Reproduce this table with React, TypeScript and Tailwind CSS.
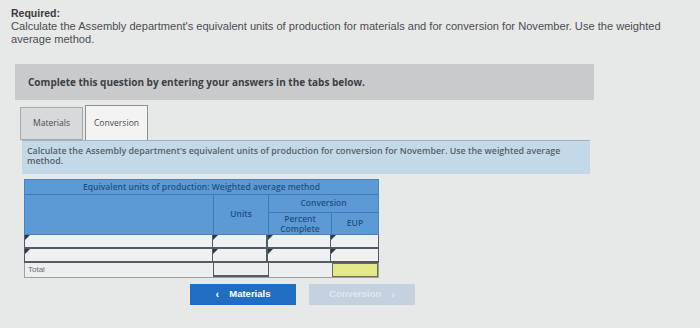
import React from "react";

const Marker = () => (
  <svg className="absolute left-0 top-0" width="5" height="5" viewBox="0 0 5 5">
    <polygon points="0,0 5,0 0,5" fill="#2b3a4a" />
  </svg>
);

function InputCell({ w, marker = true, className = "" }: { w: string; marker?: boolean; className?: string }) {
  return (
    <div className={`relative h-full ${w} ${className}`}>
      {marker && <Marker />}
    </div>
  );
}

export default function App() {
  return (
    <div className="w-[700px] h-[328px] bg-[#e7e8e8] overflow-hidden pt-[7px] pl-[11px] text-[#4a4d50]" style={{ fontFamily: "'Liberation Sans', Arial, sans-serif" }}>
      <div className="text-[10.5px] font-bold leading-[13px] text-[#3a3c3e]">Required:</div>
      <div className="text-[11.1px] leading-[13px] w-[660px]">
        Calculate the Assembly department's equivalent units of production for materials and for conversion for November. Use the weighted average method.
      </div>

      <div className="mt-[18px] ml-[4px] w-[579px] h-[36px] bg-[#c8cacb] flex items-center pl-[13px]">
        <span className="text-[10px] font-bold text-[#3d4044]" style={{ fontFamily: "'Open Sans', 'DejaVu Sans', sans-serif" }}>
          Complete this question by entering your answers in the tabs below.
        </span>
      </div>

      <div className="ml-[9px] mt-[5px] flex items-end gap-[2px]" style={{ fontFamily: "'Open Sans', 'DejaVu Sans', sans-serif" }}>
        <div className="w-[63px] h-[33px] bg-[#d8d9da] border border-[#a7a9ab] flex items-center justify-center text-[8.6px] text-[#4a4d50]">
          Materials
        </div>
        <div className="w-[63px] h-[35px] bg-[#f3f3f3] border border-[#8d9094] border-b-0 flex items-center justify-center text-[8.6px] text-[#4a4d50]">
          Conversion
        </div>
      </div>

      <div className="ml-[11px] w-[568px] h-[34px] bg-[#c4d9e7] border-t border-[#9fb4c4] pl-[5px] pt-[5px] pr-[10px] text-[8.9px] leading-[10px] font-semibold text-[#55606a]" style={{ fontFamily: "'Open Sans', 'DejaVu Sans', sans-serif" }}>
        Calculate the Assembly department's equivalent units of production for conversion for November. Use the weighted average method.
      </div>

      <div className="ml-[13px] mt-[5px] w-[355px] text-[8.5px] text-[#24507f]" style={{ fontFamily: "'Open Sans', 'DejaVu Sans', sans-serif" }}>
        <div className="bg-[#5c9ad6] border border-[#4a82c0]">
          <div className="h-[15px] flex items-center justify-center border-b border-[#4379b8] font-semibold">
            Equivalent units of production: Weighted average method
          </div>
          <div className="flex h-[39px]">
            <div className="w-[189px] border-r border-[#4379b8]" />
            <div className="w-[55px] border-r border-[#4379b8] flex items-center justify-center font-semibold">Units</div>
            <div className="flex-1 flex flex-col">
              <div className="h-[18px] border-b border-[#4379b8] flex items-center justify-center font-semibold">Conversion</div>
              <div className="flex flex-1">
                <div className="w-[63px] border-r border-[#4379b8] flex flex-col items-center justify-center text-center leading-[9.5px] font-semibold">
                  <span>Percent</span>
                  <span>Complete</span>
                </div>
                <div className="flex-1 flex items-center justify-center font-semibold">EUP</div>
              </div>
            </div>
          </div>
        </div>

        {[0, 1].map((i) => (
          <div key={i} className="flex h-[14px] bg-[#eef0f1] border-l border-r border-b-2 border-[#535c66]">
            <InputCell w="w-[188px]" className="border-r border-[#535c66]" />
            <InputCell w="w-[55px]" className="border-r-2 border-[#535c66]" />
            <InputCell w="w-[63px]" className="border-r border-[#535c66]" />
            <InputCell w="flex-1" />
          </div>
        ))}

        <div className="flex h-[15px] bg-[#eceeef] border-l border-r border-b border-[#9aa0a6]">
          <div className="w-[188px] flex items-center pl-[3px] text-[#6b6f73] text-[8px]" style={{ fontFamily: "'Liberation Sans', Arial, sans-serif" }}>Total</div>
          <div className="w-[56px] border-l border-r border-b-2 border-[#535c66]" />
          <div className="w-[63px]" />
          <div className="flex-1 bg-[#e5e98a] border border-[#6b6f4a]" />
        </div>
      </div>

      <div className="flex ml-[179px] mt-[6px] gap-[13px]" style={{ fontFamily: "'Liberation Sans', Arial, sans-serif" }}>
        <div className="w-[106px] h-[21px] bg-[#1f6ec4] flex items-center justify-center gap-[10px] text-white text-[9.5px] font-bold">
          <span className="text-[11px] leading-none">&lsaquo;</span>
          <span>Materials</span>
        </div>
        <div className="w-[106px] h-[21px] bg-[#c3d2de] flex items-center justify-center gap-[10px] text-[#dfe7ee] text-[9.5px] font-bold">
          <span>Conversion</span>
          <span className="text-[11px] leading-none">&rsaquo;</span>
        </div>
      </div>
    </div>
  );
}
